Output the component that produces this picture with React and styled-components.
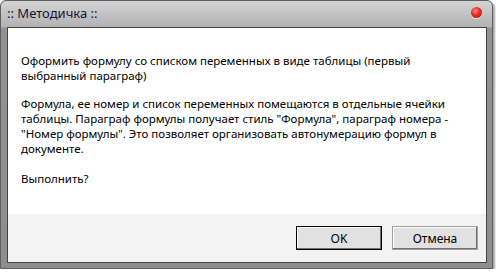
import React from "react";
import styled, { createGlobalStyle } from "styled-components";

const Global = createGlobalStyle`
  html, body { margin: 0; padding: 0; background: #ffffff; }
  body { font-family: "Noto Sans", "Open Sans", sans-serif; }
`;

const Window = styled.div`
  width: 493px;
  height: 269px;
  box-sizing: border-box;
  border: 1px solid #5e5e5e;
  border-radius: 6px 6px 0 0;
  background: linear-gradient(#d4d4d4 0px, #b2b2b2 26px, #929292 27px, #8e8e8e 100%);
  box-shadow: 2px 2px 2px rgba(0, 0, 0, 0.35);
  display: flex;
  flex-direction: column;
  padding: 0 5px 5px 6px;
`;

const TitleBar = styled.div`
  height: 26px;
  display: flex;
  align-items: center;
  justify-content: space-between;
  flex-shrink: 0;
`;

const Title = styled.div`
  font-family: "Noto Sans", sans-serif;
  font-size: 13px;
  color: #141438;
  margin-top: -3px;
`;

const CloseDot = styled.div`
  width: 11px;
  height: 11px;
  border-radius: 50%;
  margin-right: 5px;
  margin-top: -3px;
  background: radial-gradient(circle at 40% 35%, #ff8a80 0%, #e8281e 45%, #b01008 100%);
  box-shadow: 0 1px 0 rgba(255, 255, 255, 0.7);
`;

const Client = styled.div`
  flex: 1;
  border: 1px solid #444444;
  display: flex;
  flex-direction: column;
  background: #f3f3f3;
`;

const Content = styled.div`
  background: #ffffff;
  height: 186px;
  padding: 25px 0 0 13px;
  box-sizing: border-box;
  font-family: "Noto Sans", sans-serif;
  font-size: 11.5px;
  line-height: 15px;
  color: #000;
`;

const Para = styled.p`
  margin: 0 0 ${(p) => p.gap || 13}px 0;
  white-space: nowrap;
`;

const Footer = styled.div`
  flex: 1;
  display: flex;
  justify-content: flex-end;
  align-items: flex-start;
  gap: 10px;
  padding: 12px 8px 0 0;
`;

const Button = styled.button`
  width: 86px;
  height: 24px;
  box-sizing: border-box;
  border: 1px solid ${(p) => (p.primary ? "#000" : "#a0a0a0")};
  box-shadow: inset -1px -1px 0 #707070, inset 1px 1px 0 #ffffff;
  background: #e1e1e1;
  font-family: "Noto Sans", sans-serif;
  font-size: 12px;
  color: #000;
  padding: 0;
`;

export default function App() {
  return (
    <>
      <Global />
      <Window>
        <TitleBar>
          <Title>:: Методичка ::</Title>
          <CloseDot />
        </TitleBar>
        <Client>
          <Content>
            <Para>
              Оформить формулу со списком переменных в виде таблицы (первый
              <br />
              выбранный параграф)
            </Para>
            <Para gap={15}>
              Формула, ее номер и список переменных помещаются в отдельные ячейки
              <br />
              таблицы. Параграф формулы получает стиль "Формула", параграф номера -
              <br />
              "Номер формулы". Это позволяет организовать автонумерацию формул в
              <br />
              документе.
            </Para>
            <Para>Выполнить?</Para>
          </Content>
          <Footer>
            <Button primary>OK</Button>
            <Button>Отмена</Button>
          </Footer>
        </Client>
      </Window>
    </>
  );
}
